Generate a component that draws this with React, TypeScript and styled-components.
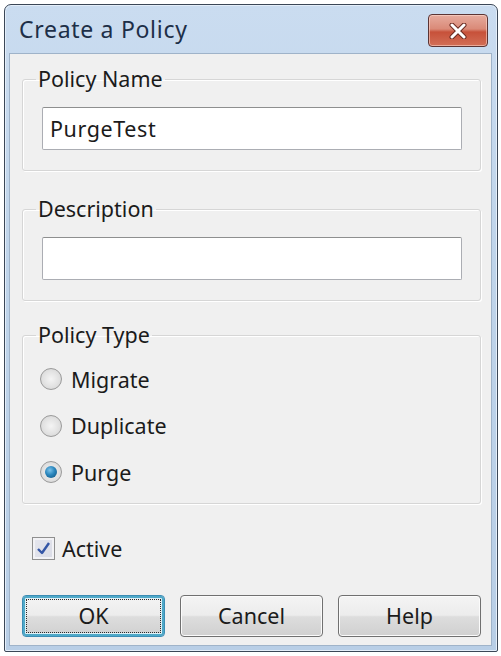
import styled, { createGlobalStyle } from 'styled-components';

const GlobalStyle = createGlobalStyle`
  html, body {
    margin: 0;
    padding: 0;
    background: #ffffff;
  }
  body {
    font-family: 'Noto Sans', 'Open Sans', sans-serif;
    color: #1b1b1b;
  }
`;

const Window = styled.div`
  margin: 4px 0 0 4px;
  width: 494px;
  height: 648px;
  box-sizing: border-box;
  border: 1px solid #3b4757;
  border-radius: 7px 7px 2px 2px;
  background: linear-gradient(180deg, #cadcf0 0%, #bfd4ea 40%, #b8cee6 100%);
  padding: 0 5px 5px 4px;
  display: flex;
  flex-direction: column;
  box-shadow: inset 0 0 0 1px #e4eef9;
`;

const TitleBar = styled.div`
  height: 48px;
  display: flex;
  align-items: center;
  justify-content: space-between;
  padding: 0 4px 0 10px;
`;

const Title = styled.span`
  font-size: 23px;
  color: #1d2f48;
  letter-spacing: 0.7px;
`;

const CloseButton = styled.button`
  width: 60px;
  height: 33px;
  margin-top: 3px;
  border: 1px solid #5b3434;
  border-radius: 4px;
  background: linear-gradient(180deg, #e6ab9e 0%, #da8a78 45%, #c7513a 55%, #d26f57 100%);
  box-shadow: inset 0 0 0 1px rgba(255, 220, 210, 0.55);
  display: flex;
  align-items: center;
  justify-content: center;
  padding: 0;
`;

const Client = styled.div`
  flex: 1;
  background: #f0f0f0;
  border: 1px solid #9fb3c9;
  padding: 13px 10px 0 12px;
  display: flex;
  flex-direction: column;
`;

const Group = styled.fieldset<{ $top: number; $padTop: number; $padBottom: number }>`
  margin: ${(p) => p.$top}px 0 0 0;
  padding: ${(p) => p.$padTop}px 18px ${(p) => p.$padBottom}px 19px;
  border: 1px solid #d6d6d6;
  border-radius: 3px;
  box-shadow: inset 1px 1px 0 #ffffff, 1px 1px 0 #ffffff;
  min-width: 0;
`;

const Legend = styled.legend`
  font-size: 21.5px;
  line-height: 24px;
  padding: 0 2px;
  margin-left: -6px;
  color: #1b1b1b;
`;

const TextBox = styled.input`
  display: block;
  width: 100%;
  box-sizing: border-box;
  height: 43px;
  border: 1px solid #abadb3;
  border-top-color: #8e8f8f;
  border-radius: 2px;
  background: #ffffff;
  font-family: inherit;
  font-size: 21.5px;
  letter-spacing: 0.6px;
  color: #1b1b1b;
  padding: 0 7px;
  outline: none;
`;

const OptionRow = styled.label`
  height: 46.5px;
  display: flex;
  align-items: center;
  gap: 9px;
  margin-left: -2px;
  font-size: 21.5px;
`;

const RadioDot = styled.span<{ $checked?: boolean }>`
  width: 22px;
  height: 22px;
  border-radius: 50%;
  box-sizing: border-box;
  border: 1px solid #9a9a9a;
  background: radial-gradient(circle at 50% 50%, #f4f4f4 0%, #e2e2e2 55%, #cfcfcf 100%);
  display: flex;
  align-items: center;
  justify-content: center;
  flex-shrink: 0;

  &::after {
    content: '';
    width: 12px;
    height: 12px;
    border-radius: 50%;
    display: ${(p) => (p.$checked ? 'block' : 'none')};
    background: radial-gradient(circle at 40% 35%, #7cc3ea 0%, #2a86bd 45%, #0f4e79 100%);
  }
`;

const CheckRow = styled.label`
  margin-top: 30px;
  height: 30px;
  display: flex;
  align-items: center;
  gap: 7px;
  padding-left: 10px;
  font-size: 21.5px;
`;

const CheckBox = styled.span`
  width: 23px;
  height: 23px;
  box-sizing: border-box;
  border: 1px solid #8f8f8f;
  background: linear-gradient(135deg, #e6e7ee 0%, #d9dbe6 100%);
  box-shadow: inset 0 0 0 2px #f2f2f5;
  display: flex;
  align-items: center;
  justify-content: center;
`;

const ButtonRow = styled.div`
  margin-top: 31px;
  display: flex;
  gap: 15px;
`;

const Button = styled.button<{ $default?: boolean }>`
  flex: 1;
  height: 42px;
  border-radius: 4px;
  border: 1px solid ${(p) => (p.$default ? '#3c8db5' : '#707070')};
  background: linear-gradient(180deg, #f4f4f4 0%, #ececec 48%, #dddddd 52%, #d0d0d0 100%);
  box-shadow: ${(p) =>
    p.$default
      ? 'inset 0 0 0 2px #4fa9c8, inset 0 0 0 3px #dff0f6'
      : 'inset 0 0 0 1px #fbfbfb'};
  font-family: inherit;
  font-size: 21.5px;
  color: #1b1b1b;
  padding: 0;
  outline: ${(p) => (p.$default ? '1px dotted #2b2b2b' : 'none')};
  outline-offset: -5px;
`;

export default function App() {
  return (
    <>
      <GlobalStyle />
      <Window>
        <TitleBar>
          <Title>Create a Policy</Title>
          <CloseButton aria-label="Close">
            <svg width="18" height="16" viewBox="0 0 18 16">
              <path
                d="M3 2 L15 14 M15 2 L3 14"
                stroke="#6a2a20"
                strokeWidth="5"
                strokeLinecap="round"
              />
              <path
                d="M3 2 L15 14 M15 2 L3 14"
                stroke="#ffffff"
                strokeWidth="3"
                strokeLinecap="round"
              />
            </svg>
          </CloseButton>
        </TitleBar>
        <Client>
          <Group $top={0} $padTop={16} $padBottom={20}>
            <Legend>Policy Name</Legend>
            <TextBox defaultValue="PurgeTest" />
          </Group>
          <Group $top={26} $padTop={16} $padBottom={20}>
            <Legend>Description</Legend>
            <TextBox defaultValue="" />
          </Group>
          <Group $top={22} $padTop={9} $padBottom={7}>
            <Legend>Policy Type</Legend>
            <OptionRow>
              <RadioDot />
              Migrate
            </OptionRow>
            <OptionRow>
              <RadioDot />
              Duplicate
            </OptionRow>
            <OptionRow>
              <RadioDot $checked />
              Purge
            </OptionRow>
          </Group>
          <CheckRow>
            <CheckBox>
              <svg width="15" height="15" viewBox="0 0 15 15">
                <path
                  d="M2 8 L6 12 L13 2"
                  fill="none"
                  stroke="#3456a6"
                  strokeWidth="2.4"
                  strokeLinejoin="round"
                />
              </svg>
            </CheckBox>
            Active
          </CheckRow>
          <ButtonRow>
            <Button $default>OK</Button>
            <Button>Cancel</Button>
            <Button>Help</Button>
          </ButtonRow>
        </Client>
      </Window>
    </>
  );
}
